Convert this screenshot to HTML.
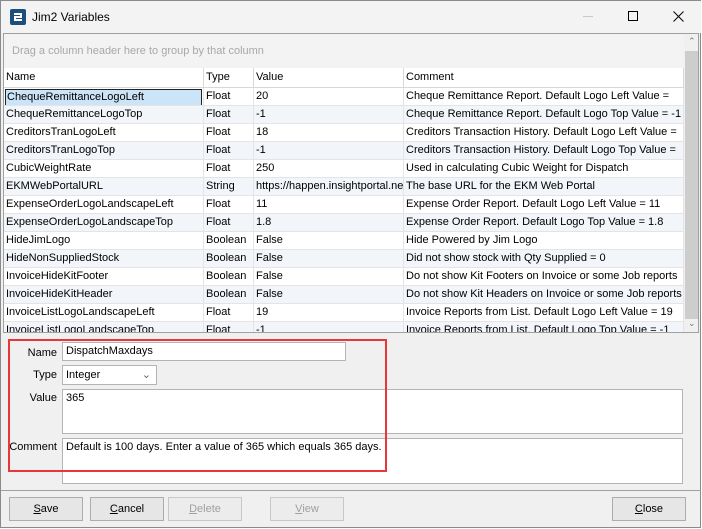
<!DOCTYPE html>
<html><head><style>
*{box-sizing:border-box;margin:0;padding:0}
body{width:702px;height:529px;background:#fff;font-family:"Liberation Sans",sans-serif;font-size:11px;color:#000;position:relative;overflow:hidden}
.win{position:absolute;left:0;top:0;width:701px;height:528px;border:1px solid #8a8a8a;background:#f0f0f0}
.title{position:absolute;left:0;top:0;width:700px;height:32px;background:#f3f3f3}
.title .t{position:absolute;left:31px;top:9px;font-size:12px}
.grid{position:absolute;left:2px;top:32px;width:696px;height:300px;background:#fff;border:1px solid #a0a0a0;overflow:hidden}
.grp{position:absolute;left:0;top:0;width:680px;height:34px;background:#f3f3f3;color:#a8a8a8;padding:11px 0 0 8px}
.hdr{position:absolute;left:0;top:34px;width:680px;height:20px;background:#fff;border-bottom:1px solid #d8d8d8}
.c{position:absolute;top:0;height:100%;padding:3px 0 0 2px;white-space:nowrap;overflow:hidden;border-right:1px solid #d8d8d8}
.row{position:absolute;left:0;width:680px;height:18px;border-bottom:1px solid #e4e4e4}
.row .c{padding-top:2px;border-right:1px solid #e4e4e4}
.alt{background:#f2f5fa}
.sb{position:absolute;left:680px;top:0;width:15px;height:298px;background:#f0f0f0}
.thumb{position:absolute;left:681px;top:17px;width:13px;height:268px;background:#cdcdcd}
.lbl{position:absolute;font-size:11px;text-align:right;width:50px}
.inp{position:absolute;background:#fff;border:1px solid #b4b4b4;padding:2px 3px;font-size:11px}
.btn{position:absolute;top:496px;width:74px;height:24px;border:1px solid #adadad;background:#e6e6e6;text-align:center;padding-top:5px}
.dis{color:#a0a0a0;border-color:#c8c8c8;background:#ececec}
</style></head><body>
<div class="win">
<div class="title">
<svg style="position:absolute;left:9px;top:8px" width="16" height="16"><rect width="16" height="16" rx="2" fill="#1c4f7a"/><path d="M4 5h7v3H5v3h7" stroke="#fff" stroke-width="2" fill="none"/></svg>
<div class="t">Jim2 Variables</div>
<div style="position:absolute;left:582px;top:15px;width:10px;height:1px;background:#c8c8c8"></div>
<div style="position:absolute;left:627px;top:10px;width:10px;height:10px;border:1px solid #000"></div>
<svg style="position:absolute;left:672px;top:10px" width="11" height="11"><path d="M0.5 0.5L10.5 10.5M10.5 0.5L0.5 10.5" stroke="#000" stroke-width="1"/></svg>
</div>
<div class="grid">
<div class="grp">Drag a column header here to group by that column</div>
<div class="hdr">
<div class="c" style="left:0;width:200px">Name</div>
<div class="c" style="left:200px;width:50px">Type</div>
<div class="c" style="left:250px;width:150px">Value</div>
<div class="c" style="left:400px;width:280px">Comment</div>
</div>
<div id="rows"></div>
<div class="sb" style="top:0"></div>
<div class="thumb"></div>
<div style="position:absolute;left:684px;top:2px;font-size:9px;color:#777">⌃</div>
<div style="position:absolute;left:684px;top:284px;font-size:9px;color:#777">⌄</div>
</div>
<div style="position:absolute;left:7px;top:338px;width:379px;height:133px;border:2px solid #e8373b;z-index:2"></div>
<div class="lbl" style="left:6px;top:346px">Name</div>
<div class="inp" style="left:61px;top:341px;width:284px;height:19px">DispatchMaxdays</div>
<div class="lbl" style="left:6px;top:368px">Type</div>
<div class="inp" style="left:61px;top:364px;width:95px;height:20px;padding-top:3px">Integer<span style="position:absolute;right:5px;top:2px;color:#666">⌄</span></div>
<div class="lbl" style="left:6px;top:391px">Value</div>
<div class="inp" style="left:61px;top:388px;width:621px;height:45px">365</div>
<div class="lbl" style="left:0;top:440px;width:56px">Comment</div>
<div class="inp" style="left:61px;top:437px;width:621px;height:46px">Default is 100 days. Enter a value of 365 which equals 365 days.</div>
<div style="position:absolute;left:0;top:489px;width:700px;height:1px;background:#a0a0a0"></div>
<div class="btn" style="left:8px"><u>S</u>ave</div>
<div class="btn" style="left:89px"><u>C</u>ancel</div>
<div class="btn dis" style="left:167px"><u>D</u>elete</div>
<div class="btn dis" style="left:269px"><u>V</u>iew</div>
<div class="btn" style="left:611px"><u>C</u>lose</div>
</div>
<script>
var d=[["ChequeRemittanceLogoLeft","Float","20","Cheque Remittance Report. Default Logo Left Value ="],
["ChequeRemittanceLogoTop","Float","-1","Cheque Remittance Report. Default Logo Top Value = -1"],
["CreditorsTranLogoLeft","Float","18","Creditors Transaction History. Default Logo Left Value ="],
["CreditorsTranLogoTop","Float","-1","Creditors Transaction History. Default Logo Top Value ="],
["CubicWeightRate","Float","250","Used in calculating Cubic Weight for Dispatch"],
["EKMWebPortalURL","String","https://happen.insightportal.net","The base URL for the EKM Web Portal"],
["ExpenseOrderLogoLandscapeLeft","Float","11","Expense Order Report. Default Logo Left Value = 11"],
["ExpenseOrderLogoLandscapeTop","Float","1.8","Expense Order Report. Default Logo Top Value = 1.8"],
["HideJimLogo","Boolean","False","Hide Powered by Jim Logo"],
["HideNonSuppliedStock","Boolean","False","Did not show stock with Qty Supplied = 0"],
["InvoiceHideKitFooter","Boolean","False","Do not show Kit Footers on Invoice or some Job reports"],
["InvoiceHideKitHeader","Boolean","False","Do not show Kit Headers on Invoice or some Job reports"],
["InvoiceListLogoLandscapeLeft","Float","19","Invoice Reports from List. Default Logo Left Value = 19"],
["InvoiceListLogoLandscapeTop","Float","-1","Invoice Reports from List. Default Logo Top Value = -1"]];
var h="";d.forEach(function(r,i){h+='<div class="row'+(i%2?' alt':'')+'" style="top:'+(54+i*18)+'px">'+
'<div class="c" style="left:0;width:200px">'+(i==0?'<span style="display:block;margin:-1px 0 0 -1px;height:17px;width:197px;background:#cce4f7;border:1px solid #222;padding:1px 0 0 1px">'+r[0]+'</span>':r[0])+'</div>'+
'<div class="c" style="left:200px;width:50px">'+r[1]+'</div><div class="c" style="left:250px;width:150px">'+r[2]+'</div><div class="c" style="left:400px;width:280px">'+r[3]+'</div></div>';});
document.getElementById("rows").innerHTML=h;
</script>
</body></html>
